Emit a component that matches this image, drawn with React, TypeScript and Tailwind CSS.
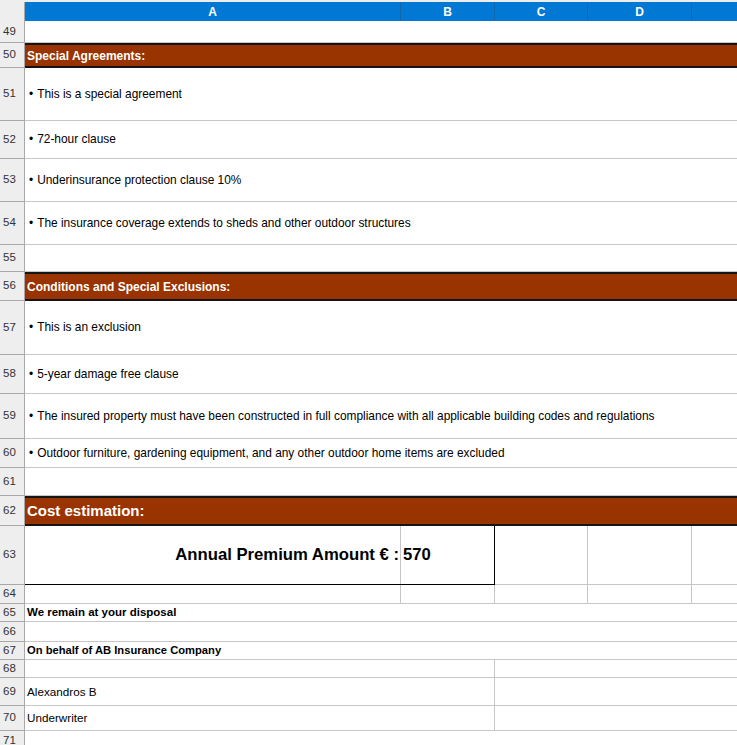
import type { ReactNode } from "react"

const font = { fontFamily: '"Liberation Sans", Arial, sans-serif' }

type RowProps = { n: number; h: string; children?: ReactNode; line?: string }

const Row = ({ n, h, children, line = "border-b border-[#c6c6c6]" }: RowProps) => (
    <div className={`flex ${h}`}>
        <div className="w-[25px] shrink-0 bg-[#eeeeee] border-r border-b border-[#a8a8a8] text-[11.5px] text-[#333] flex items-center pl-[3px]">
            {n}
        </div>
        <div className={`flex-1 min-w-0 flex ${line}`}>{children}</div>
    </div>
)

const Bullet = ({ text }: { text: string }) => (
    <div className="flex items-center pl-[4px] pt-[1px] text-[11.9px] text-black whitespace-nowrap">
        <span className="mr-[4px]">•</span>
        {text}
    </div>
)

const Band = ({ text, big }: { text: string; big?: boolean }) => (
    <div className="flex-1 bg-[#993300] border-y-2 border-[#141414] flex items-center pl-[2px]">
        <span className={big ? "text-white font-bold text-[15px]" : "text-white font-bold text-[12px]"}>{text}</span>
    </div>
)

export default function App() {
    return (
        <div className="w-[737px] h-[745px] overflow-hidden bg-white" style={font}>
            <div className="h-[2px] bg-[#eeeeee]" />
            <div className="flex h-[19px]">
                <div className="w-[25px] shrink-0 bg-[#eeeeee] border-r border-[#a8a8a8]" />
                <div className="w-[376px] shrink-0 bg-[#0078d4] border-r border-[#1266b0] text-white font-bold text-[12px] flex items-center justify-center">A</div>
                <div className="w-[94px] shrink-0 bg-[#0078d4] border-r border-[#1266b0] text-white font-bold text-[12px] flex items-center justify-center">B</div>
                <div className="w-[93px] shrink-0 bg-[#0078d4] border-r border-[#1266b0] text-white font-bold text-[12px] flex items-center justify-center">C</div>
                <div className="w-[104px] shrink-0 bg-[#0078d4] border-r border-[#1266b0] text-white font-bold text-[12px] flex items-center justify-center">D</div>
                <div className="flex-1 bg-[#0078d4]" />
            </div>

            <Row n={49} h="h-[22px]" />
            <Row n={50} h="h-[25px]" line="">
                <Band text="Special Agreements:" />
            </Row>
            <Row n={51} h="h-[53px]"><Bullet text="This is a special agreement" /></Row>
            <Row n={52} h="h-[38px]"><Bullet text="72-hour clause" /></Row>
            <Row n={53} h="h-[43px]"><Bullet text="Underinsurance protection clause 10%" /></Row>
            <Row n={54} h="h-[43px]"><Bullet text="The insurance coverage extends to sheds and other outdoor structures" /></Row>
            <Row n={55} h="h-[27px]" />
            <Row n={56} h="h-[29px]" line="">
                <Band text="Conditions and Special Exclusions:" />
            </Row>
            <Row n={57} h="h-[54px]"><Bullet text="This is an exclusion" /></Row>
            <Row n={58} h="h-[39px]"><Bullet text="5-year damage free clause" /></Row>
            <Row n={59} h="h-[45px]"><Bullet text="The insured property must have been constructed in full compliance with all applicable building codes and regulations" /></Row>
            <Row n={60} h="h-[29px]"><Bullet text="Outdoor furniture, gardening equipment, and any other outdoor home items are excluded" /></Row>
            <Row n={61} h="h-[28px]" />
            <Row n={62} h="h-[30px]" line="">
                <Band text="Cost estimation:" big />
            </Row>

            <Row n={63} h="h-[59px]" line="">
                <div className="flex w-[470px] shrink-0 border-r border-b border-black">
                    <div className="w-[376px] shrink-0 border-r border-[#c6c6c6] flex items-center justify-end pr-[1px] text-[16.7px] font-bold text-black whitespace-nowrap">
                        Annual Premium Amount € :
                    </div>
                    <div className="flex-1 flex items-center pl-[2px] text-[16.7px] font-bold text-black">570</div>
                </div>
                <div className="w-[93px] shrink-0 border-r border-b border-[#c6c6c6]" />
                <div className="w-[104px] shrink-0 border-r border-b border-[#c6c6c6]" />
                <div className="flex-1 border-b border-[#c6c6c6]" />
            </Row>
            <Row n={64} h="h-[19px]">
                <div className="w-[376px] shrink-0 border-r border-[#c6c6c6]" />
                <div className="w-[94px] shrink-0 border-r border-[#c6c6c6]" />
                <div className="w-[93px] shrink-0 border-r border-[#c6c6c6]" />
                <div className="w-[104px] shrink-0 border-r border-[#c6c6c6]" />
            </Row>
            <Row n={65} h="h-[18px]">
                <div className="flex items-center pl-[2px] text-[11.5px] font-bold text-black">We remain at your disposal</div>
            </Row>
            <Row n={66} h="h-[20px]" />
            <Row n={67} h="h-[18px]">
                <div className="flex items-center pl-[2px] text-[11.2px] font-bold text-black">On behalf of AB Insurance Company</div>
            </Row>
            <Row n={68} h="h-[18px]">
                <div className="w-[470px] shrink-0 border-r border-[#c6c6c6]" />
            </Row>
            <Row n={69} h="h-[28px]">
                <div className="w-[470px] shrink-0 border-r border-[#c6c6c6] flex items-center pl-[2px] text-[11.7px] text-black">Alexandros B</div>
            </Row>
            <Row n={70} h="h-[25px]">
                <div className="w-[470px] shrink-0 border-r border-[#c6c6c6] flex items-center pl-[2px] text-[11.7px] text-black">Underwriter</div>
            </Row>
            <Row n={71} h="h-[20px]" />
        </div>
    )
}
